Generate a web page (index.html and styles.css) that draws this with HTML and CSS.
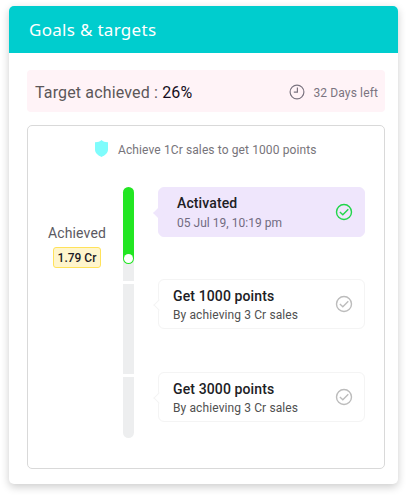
FILE: index.html
```html
<!DOCTYPE html>
<html lang="en">
<head>
    <meta charset="UTF-8">
    <title>Goals &amp; targets</title>
    <link rel="stylesheet" href="styles.css">
</head>
<body>
    <div class="card">
        <h1 class="card-header">Goals &amp; targets</h1>
        <div class="card-body">
            <div class="summary">
                <div class="target">Target achieved : <span class="percent">26%</span></div>
                <svg class="clock" width="16" height="16" viewBox="0 0 16 16" fill="none" stroke="#7b7480" stroke-width="1.2">
                    <circle cx="8" cy="8" r="6.9"/>
                    <path d="M8.4 3.6V8.2H4.8"/>
                </svg>
                <span class="days">32 Days left</span>
            </div>

            <div class="panel">
                <div class="hint">
                    <svg class="shield" width="13" height="17" viewBox="0 0 13 17">
                        <path d="M6.5 0C5 1.6 2.6 2.3 0 2.2V9.5C0 13 3 15.4 6.5 17C10 15.4 13 13 13 9.5V2.2C10.4 2.3 8 1.6 6.5 0Z" fill="#7ffcfc"/>
                    </svg>
                    <span class="hint-text">Achieve 1Cr sales to get 1000 points</span>
                </div>

                <div class="timeline">
                    <div class="achieved">
                        <span class="achieved-label">Achieved</span>
                        <span class="achieved-value">1.79 Cr</span>
                    </div>

                    <div class="bar">
                        <div class="segment first">
                            <div class="progress"><span class="knob"></span></div>
                        </div>
                        <div class="segment middle"></div>
                        <div class="segment last"></div>
                    </div>

                    <div class="steps">
                        <div class="step active">
                            <div class="step-info">
                                <div class="step-title">Activated</div>
                                <div class="step-text">05 Jul 19, 10:19 pm</div>
                            </div>
                            <svg class="check" width="18" height="18" viewBox="0 0 18 18" fill="none" stroke="currentColor" stroke-width="1.4">
                                <circle cx="9" cy="9" r="7.5"/>
                                <path d="M4.9 9.1L7.8 11.7L13.3 6.2"/>
                            </svg>
                        </div>
                        <div class="step">
                            <div class="step-info">
                                <div class="step-title">Get 1000 points</div>
                                <div class="step-text">By achieving 3 Cr sales</div>
                            </div>
                            <svg class="check" width="18" height="18" viewBox="0 0 18 18" fill="none" stroke="currentColor" stroke-width="1.4">
                                <circle cx="9" cy="9" r="7.5"/>
                                <path d="M4.9 9.1L7.8 11.7L13.3 6.2"/>
                            </svg>
                        </div>
                        <div class="step">
                            <div class="step-info">
                                <div class="step-title">Get 3000 points</div>
                                <div class="step-text">By achieving 3 Cr sales</div>
                            </div>
                            <svg class="check" width="18" height="18" viewBox="0 0 18 18" fill="none" stroke="currentColor" stroke-width="1.4">
                                <circle cx="9" cy="9" r="7.5"/>
                                <path d="M4.9 9.1L7.8 11.7L13.3 6.2"/>
                            </svg>
                        </div>
                    </div>
                </div>
            </div>
        </div>
    </div>
</body>
</html>
```
FILE: styles.css
```css
* {
    box-sizing: border-box;
}

body {
    margin: 0;
    padding: 6px 9px 12px;
    font-family: Roboto, Arial, sans-serif;
    background-color: #fff;
}

.card {
    height: 478px;
    border-radius: 5px;
    overflow: hidden;
    background-color: #fff;
    box-shadow: 0 3px 8px rgba(0, 0, 0, 0.2);
}

.card-header {
    height: 47px;
    margin: 0;
    padding-left: 20px;
    line-height: 47px;
    font-family: "Noto Sans", sans-serif;
    font-size: 17px;
    font-weight: 400;
    letter-spacing: 0.3px;
    color: #fff;
    background-color: #00cdce;
}

.card-body {
    padding: 17px 13px 0 18px;
}

.summary {
    display: flex;
    align-items: center;
    width: 358px;
    height: 42px;
    padding: 2px 7px 0 8px;
    border-radius: 4px;
    background-color: #fff3f7;
}

.target {
    flex: 1;
    font-size: 16px;
    letter-spacing: 0.15px;
    color: #5c5759;
}

.percent {
    color: #150d20;
}

.clock {
    margin-right: 8px;
}

.days {
    padding-top: 2px;
    font-size: 12px;
    letter-spacing: 0.13px;
    color: #7b7480;
}

.panel {
    width: 358px;
    height: 344px;
    margin-top: 13px;
    border: 1px solid #d9d9d9;
    border-radius: 5px;
}

.hint {
    display: flex;
    height: 61px;
    padding: 14px 0 0 67px;
}

.hint-text {
    margin: 3px 0 0 10px;
    font-size: 12px;
    line-height: 14px;
    letter-spacing: 0.11px;
    color: #77747a;
}

.timeline {
    display: flex;
}

.achieved {
    display: flex;
    flex-direction: column;
    align-items: center;
    width: 95px;
    padding: 38px 0 0 3px;
}

.achieved-label {
    font-size: 14px;
    line-height: 16px;
    letter-spacing: 0.15px;
    color: #5b5962;
}

.achieved-value {
    width: 48px;
    height: 21px;
    margin-top: 6px;
    border: 1px solid #ffe25a;
    border-radius: 3px;
    font-size: 12px;
    font-weight: 500;
    line-height: 20px;
    text-align: center;
    color: #1c1b26;
    background-color: #fff5cc;
}

.bar {
    display: flex;
    flex-direction: column;
    gap: 3px;
    width: 11px;
}

.segment {
    background-color: #edeeef;
}

.first {
    height: 94px;
    border-radius: 6px 6px 0 0;
}

.middle {
    height: 90px;
}

.last {
    height: 61px;
    border-radius: 0 0 6px 6px;
}

.progress {
    display: flex;
    align-items: flex-end;
    justify-content: center;
    height: 77px;
    padding-bottom: 1px;
    border-radius: 6px;
    background-color: #22e622;
}

.knob {
    width: 9px;
    height: 9px;
    border-radius: 50%;
    background-color: #fff;
}

.steps {
    display: flex;
    flex-direction: column;
    gap: 43px;
    margin-left: 24px;
}

.step {
    position: relative;
    display: flex;
    align-items: center;
    width: 207px;
    height: 50px;
    padding: 0 11px 0 14px;
    border: 1px solid #f4f4f4;
    border-radius: 6px;
    color: #bcbcbc;
    background-color: #fff;
}

/* Pointer towards the bar */
.step::before {
    content: "";
    position: absolute;
    left: -4px;
    top: 21px;
    width: 7px;
    height: 7px;
    border: 1px solid #f4f4f4;
    border-width: 0 0 1px 1px;
    background-color: #fff;
    transform: rotate(45deg);
}

.active {
    padding-left: 18px;
    border-color: #efe6fc;
    color: #20d64a;
    background-color: #efe6fc;
    margin-bottom: -1px;
}

.active::before {
    border-color: #efe6fc;
    background-color: #efe6fc;
}

.step-info {
    flex: 1;
    padding-top: 2px;
}

.step-title {
    font-size: 14px;
    font-weight: 500;
    line-height: 18px;
    letter-spacing: 0.12px;
    color: #202024;
}

.step-text {
    margin-top: 2px;
    font-size: 12px;
    line-height: 16px;
    letter-spacing: 0.11px;
    color: #505050;
}

.active .step-info {
    padding-top: 0;
}

.active .step-text {
    margin-top: 3px;
    letter-spacing: 0.03px;
    color: #716b80;
}
```
